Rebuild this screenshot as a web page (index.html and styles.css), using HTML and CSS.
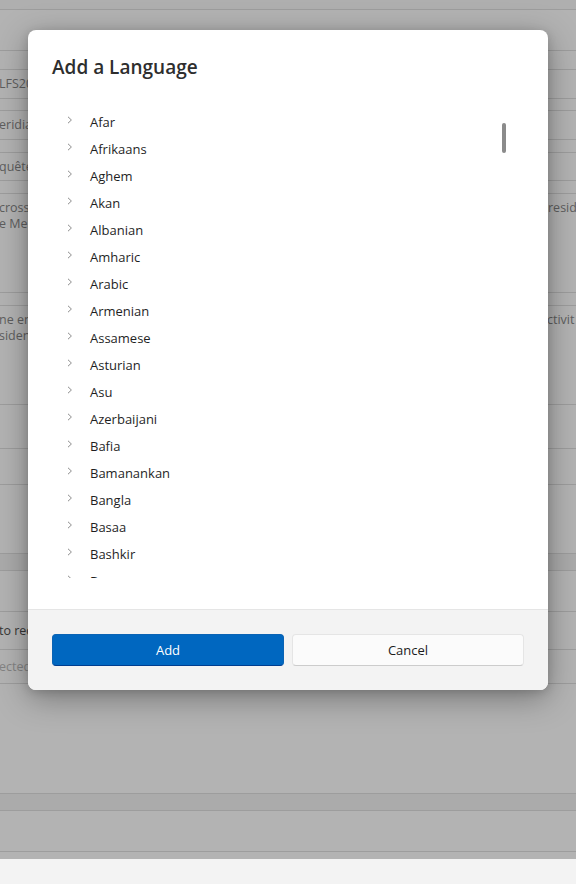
FILE: index.html
```html
<!DOCTYPE html>
<html lang="en">
<head>
<meta charset="utf-8">
<title>Add a Language</title>
<link rel="stylesheet" href="styles.css">
</head>
<body>
<div class="page">
  <div class="row h10"></div>
  <div class="row h41"></div>
  <div class="row h19"></div>
  <div class="row h29 mid"><span class="cell">LFS2023</span></div>
  <div class="row h12"></div>
  <div class="row h29 mid"><span class="cell">eridian</span></div>
  <div class="row h13"></div>
  <div class="row h28 mid"><span class="cell">quête</span></div>
  <div class="row h13"></div>
  <div class="row h99 top">
    <span class="cell">cross-<br>e Mer</span>
    <span class="cell right">resid</span>
  </div>
  <div class="row h13"></div>
  <div class="row h99 top">
    <span class="cell">ne end<br>sident</span>
    <span class="cell right cut">ctivit</span>
  </div>
  <div class="row h44"></div>
  <div class="row h36"></div>
  <div class="row h69"></div>
  <div class="row h17 band"></div>
  <div class="row h41"></div>
  <div class="row h38 mid"><span class="cell dark">to rec</span></div>
  <div class="row h34 mid"><span class="cell light">ected</span></div>
  <div class="row h110"></div>
  <div class="row h17 band"></div>
  <div class="row h41"></div>
  <div class="row h7 noline"></div>
  <div class="strip"></div>
</div>

<div class="dialog" role="dialog" aria-label="Add a Language">
  <div class="dialog-body">
    <h1 class="title">Add a Language</h1>
    <div class="list-view">
      <ul class="list">
        <li class="item"><span class="chev"><svg width="6" height="8" viewBox="0 0 6 8"><path d="M1 0.8 L4.4 4 L1 7.2" fill="none" stroke="#8c8c8c" stroke-width="1"/></svg></span>Afar</li>
        <li class="item"><span class="chev"><svg width="6" height="8" viewBox="0 0 6 8"><path d="M1 0.8 L4.4 4 L1 7.2" fill="none" stroke="#8c8c8c" stroke-width="1"/></svg></span>Afrikaans</li>
        <li class="item"><span class="chev"><svg width="6" height="8" viewBox="0 0 6 8"><path d="M1 0.8 L4.4 4 L1 7.2" fill="none" stroke="#8c8c8c" stroke-width="1"/></svg></span>Aghem</li>
        <li class="item"><span class="chev"><svg width="6" height="8" viewBox="0 0 6 8"><path d="M1 0.8 L4.4 4 L1 7.2" fill="none" stroke="#8c8c8c" stroke-width="1"/></svg></span>Akan</li>
        <li class="item"><span class="chev"><svg width="6" height="8" viewBox="0 0 6 8"><path d="M1 0.8 L4.4 4 L1 7.2" fill="none" stroke="#8c8c8c" stroke-width="1"/></svg></span>Albanian</li>
        <li class="item"><span class="chev"><svg width="6" height="8" viewBox="0 0 6 8"><path d="M1 0.8 L4.4 4 L1 7.2" fill="none" stroke="#8c8c8c" stroke-width="1"/></svg></span>Amharic</li>
        <li class="item"><span class="chev"><svg width="6" height="8" viewBox="0 0 6 8"><path d="M1 0.8 L4.4 4 L1 7.2" fill="none" stroke="#8c8c8c" stroke-width="1"/></svg></span>Arabic</li>
        <li class="item"><span class="chev"><svg width="6" height="8" viewBox="0 0 6 8"><path d="M1 0.8 L4.4 4 L1 7.2" fill="none" stroke="#8c8c8c" stroke-width="1"/></svg></span>Armenian</li>
        <li class="item"><span class="chev"><svg width="6" height="8" viewBox="0 0 6 8"><path d="M1 0.8 L4.4 4 L1 7.2" fill="none" stroke="#8c8c8c" stroke-width="1"/></svg></span>Assamese</li>
        <li class="item"><span class="chev"><svg width="6" height="8" viewBox="0 0 6 8"><path d="M1 0.8 L4.4 4 L1 7.2" fill="none" stroke="#8c8c8c" stroke-width="1"/></svg></span>Asturian</li>
        <li class="item"><span class="chev"><svg width="6" height="8" viewBox="0 0 6 8"><path d="M1 0.8 L4.4 4 L1 7.2" fill="none" stroke="#8c8c8c" stroke-width="1"/></svg></span>Asu</li>
        <li class="item"><span class="chev"><svg width="6" height="8" viewBox="0 0 6 8"><path d="M1 0.8 L4.4 4 L1 7.2" fill="none" stroke="#8c8c8c" stroke-width="1"/></svg></span>Azerbaijani</li>
        <li class="item"><span class="chev"><svg width="6" height="8" viewBox="0 0 6 8"><path d="M1 0.8 L4.4 4 L1 7.2" fill="none" stroke="#8c8c8c" stroke-width="1"/></svg></span>Bafia</li>
        <li class="item"><span class="chev"><svg width="6" height="8" viewBox="0 0 6 8"><path d="M1 0.8 L4.4 4 L1 7.2" fill="none" stroke="#8c8c8c" stroke-width="1"/></svg></span>Bamanankan</li>
        <li class="item"><span class="chev"><svg width="6" height="8" viewBox="0 0 6 8"><path d="M1 0.8 L4.4 4 L1 7.2" fill="none" stroke="#8c8c8c" stroke-width="1"/></svg></span>Bangla</li>
        <li class="item"><span class="chev"><svg width="6" height="8" viewBox="0 0 6 8"><path d="M1 0.8 L4.4 4 L1 7.2" fill="none" stroke="#8c8c8c" stroke-width="1"/></svg></span>Basaa</li>
        <li class="item"><span class="chev"><svg width="6" height="8" viewBox="0 0 6 8"><path d="M1 0.8 L4.4 4 L1 7.2" fill="none" stroke="#8c8c8c" stroke-width="1"/></svg></span>Bashkir</li>
        <li class="item"><span class="chev"><svg width="6" height="8" viewBox="0 0 6 8"><path d="M1 0.8 L4.4 4 L1 7.2" fill="none" stroke="#8c8c8c" stroke-width="1"/></svg></span>Basque</li>
        <li class="item"><span class="chev"><svg width="6" height="8" viewBox="0 0 6 8"><path d="M1 0.8 L4.4 4 L1 7.2" fill="none" stroke="#8c8c8c" stroke-width="1"/></svg></span>Belarusian</li>
      </ul>
      <div class="thumb"></div>
    </div>
  </div>
  <div class="dialog-footer">
    <button class="btn primary" type="button">Add</button>
    <button class="btn secondary" type="button">Cancel</button>
  </div>
</div>
</body>
</html>
```

FILE: styles.css
```css
* { box-sizing: border-box; }

html, body {
  margin: 0;
  padding: 0;
  width: 576px;
  height: 884px;
  overflow: hidden;
  background: #b3b3b3;
  font-family: "Open Sans", "Noto Sans", sans-serif;
}

/* dimmed background page */
.page {
  display: flex;
  flex-direction: column;
  width: 576px;
  height: 884px;
  background: #b3b3b3;
}

.row {
  position: relative;
  flex: none;
  display: flex;
  border-bottom: 1px solid #9d9d9d;
  font-size: 12.5px;
  line-height: 16px;
  color: #5e5e5e;
  overflow: hidden;
}
.row.noline { border-bottom: none; }
.row.band { background: #ababab; }
.row.mid { align-items: center; }
.row.top { align-items: flex-start; padding-top: 6px; }

.cell {
  margin-left: -1px;
  white-space: nowrap;
}
.cell.right {
  position: absolute;
  left: 549px;
  top: 6px;
}
.cell.right.cut { left: 548px; }
.cell.dark { color: #363636; }
.cell.light { color: #838383; }

.h7 { height: 7px; }
.h10 { height: 10px; background: #afafaf; }
.h12 { height: 12px; }
.h13 { height: 13px; }
.h17 { height: 17px; }
.h19 { height: 19px; }
.h28 { height: 28px; }
.h29 { height: 29px; }
.h34 { height: 34px; }
.h36 { height: 36px; }
.h38 { height: 38px; }
.h41 { height: 41px; }
.h44 { height: 44px; }
.h69 { height: 69px; }
.h99 { height: 99px; }
.h110 { height: 110px; }

.strip {
  flex: none;
  height: 25px;
  background: #f3f3f3;
}

/* dialog */
.dialog {
  position: absolute;
  left: 28px;
  top: 30px;
  width: 520px;
  height: 660px;
  display: flex;
  flex-direction: column;
  background: #ffffff;
  border-radius: 8px;
  overflow: hidden;
  box-shadow: 0 8px 32px rgba(0, 0, 0, 0.34), 0 2px 10px rgba(0, 0, 0, 0.14);
}

.dialog-body {
  flex: 1;
  display: flex;
  flex-direction: column;
  padding: 24px 24px 31px 24px;
}

.title {
  margin: 0;
  height: 28px;
  font-size: 19px;
  line-height: 27px;
  font-weight: 600;
  color: #2e2e2e;
  letter-spacing: 0;
}

.list-view {
  position: relative;
  margin-top: 18px;
  height: 478px;
  overflow: hidden;
}

.list {
  list-style: none;
  margin: 0;
  padding: 8px 0 0 0;
}

.item {
  display: flex;
  align-items: center;
  height: 27px;
  font-size: 13px;
  color: #1f1f1f;
}

.chev {
  display: flex;
  align-items: center;
  width: 38px;
  padding-left: 15px;
  margin-top: -3px;
}
.chev svg { display: block; }

.thumb {
  position: absolute;
  left: 450px;
  top: 23px;
  width: 3.5px;
  height: 30px;
  border-radius: 2px;
  background: #8b8b8b;
}

.dialog-footer {
  flex: none;
  height: 81px;
  display: flex;
  gap: 8px;
  padding: 24px;
  background: #f3f3f3;
  border-top: 1px solid #e5e5e5;
}

.btn {
  flex: 1;
  height: 32px;
  border-radius: 4px;
  font-family: "Open Sans", "Noto Sans", sans-serif;
  font-size: 13px;
  line-height: 20px;
  padding: 0 12px;
}
.btn.primary {
  background: #0067c0;
  color: #ffffff;
  border: 1px solid #0a63b4;
  border-bottom-color: #003d8f;
}
.btn.secondary {
  background: #fbfbfb;
  color: #1b1b1b;
  border: 1px solid #e5e5e5;
  border-bottom-color: #cccccc;
}
```
